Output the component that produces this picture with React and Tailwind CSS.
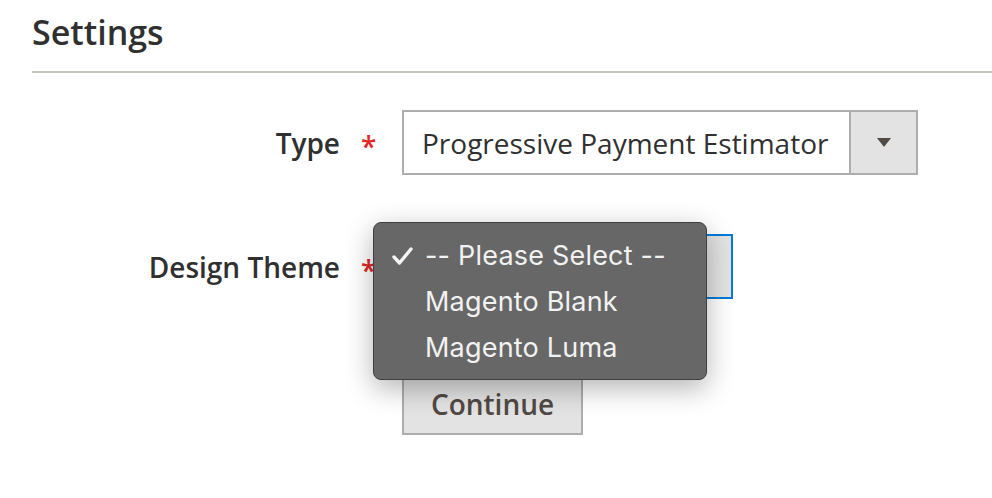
const Row = ({ label, children, className = "" }) => (
  <div className={`flex items-center ${className}`}>
    <label className="w-[340px] text-right text-[28px] font-semibold text-[#303030]">{label}</label>
    <span className="w-[62px] pl-[21px] text-[28px] font-semibold text-[#e22626] leading-none pt-[6px]">*</span>
    {children}
  </div>
);

export default function App() {
  return (
    <div className="min-h-[498px] bg-white font-['Open_Sans',sans-serif] overflow-hidden">
      <div className="pl-[32px]">
        <h1 className="pt-[8px] text-[34px] font-semibold text-[#303030] leading-[48px]">Settings</h1>
        <div className="mt-[15px] h-[2px] bg-[#c6c4b8]" />
      </div>

      <Row label="Type" className="mt-[37px]">
        <div className="flex h-[65px] w-[516px] border-2 border-[#adadad] bg-white">
          <div className="flex flex-1 items-center pl-[18px] text-[28px] text-[#303030]">Progressive Payment Estimator</div>
          <div className="flex w-[67px] items-center justify-center border-l-2 border-[#adadad] bg-[#e3e3e3]">
            <svg width="14" height="9" viewBox="0 0 14 9"><path d="M0 0h14L7 9z" fill="#514943" /></svg>
          </div>
        </div>
      </Row>

      <Row label="Design Theme" className="mt-[59px]">
        <div className="relative">
          <div className="flex h-[65px] w-[331px] border-2 border-[#007bdb] bg-white">
            <div className="flex-1" />
            <div className="w-[66px] bg-[#e3e3e3]" />
          </div>
          <div className="absolute left-[-29px] top-[-12px] z-10 w-[334px] h-[158px] rounded-[8px] border border-[#3f3f3f] bg-[#676767] pt-[10px] font-['Inter',sans-serif] text-[27px] tracking-[0.2px] text-[#f2f2f2] shadow-[0_8px_28px_rgba(0,0,0,0.3)]">
            <div className="flex h-[46px] items-center">
              <span className="w-[51px] pl-[18px]">
                <svg width="21" height="18" viewBox="0 0 21 18"><path d="M2 10l5.5 6L19 2" fill="none" stroke="#f4f4f4" strokeWidth="3.4" strokeLinecap="round" strokeLinejoin="round" /></svg>
              </span>
              <span>-- Please Select --</span>
            </div>
            <div className="flex h-[46px] items-center pl-[51px]">Magento Blank</div>
            <div className="flex h-[46px] items-center pl-[51px]">Magento Luma</div>
          </div>
        </div>
      </Row>

      <div className="mt-[74px] pl-[402px]">
        <button className="h-[62px] w-[181px] border-2 border-[#adadad] bg-[#e3e3e3] text-[28px] font-semibold text-[#514943]">Continue</button>
      </div>
    </div>
  );
}
